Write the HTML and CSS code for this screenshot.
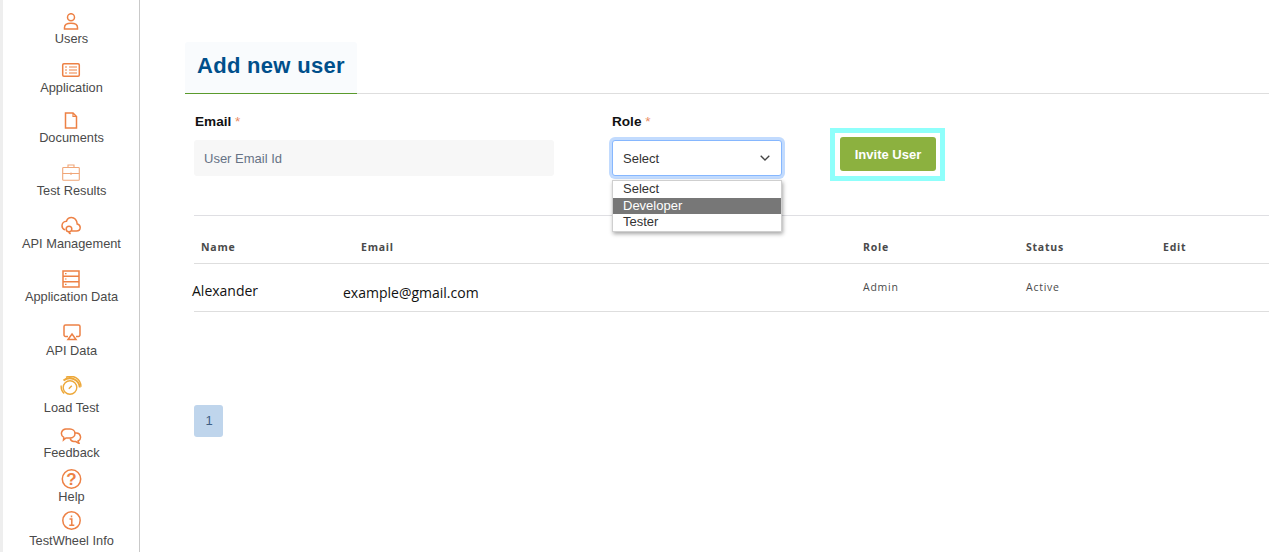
FILE: index.html
```html
<!DOCTYPE html>
<html lang="en">
<head>
<meta charset="utf-8">
<title>Add new user</title>
<link rel="stylesheet" href="styles.css">
</head>
<body>
<div class="app">
  <nav class="sidebar">
    <a class="nav-item users">
      <svg class="icon" width="24" height="17" viewBox="0 0 24 17"><circle cx="12" cy="4.200" r="3.500"/><path d="M5.500 16v-1.500c0-2.600 2.400-4.200 6.500-4.200s6.500 1.600 6.500 4.200V16z"/></svg>
      <span>Users</span>
    </a>
    <a class="nav-item application">
      <svg class="icon" width="20" height="16" viewBox="0 0 20 16"><rect x="1.700" y="1.700" width="16.600" height="12.600" rx="1.200"/><path class="thin" d="M4 5h2M4 8h2M4 11h2M8 5h8M8 8h8M8 11h8"/></svg>
      <span>Application</span>
    </a>
    <a class="nav-item documents">
      <svg class="icon" width="14" height="17" viewBox="0 0 14 17"><path d="M1.500 1h7.500l3.500 3.500v11.500h-11z"/><path class="thin" d="M9 1v3.500h3.500"/></svg>
      <span>Documents</span>
    </a>
    <a class="nav-item results">
      <svg class="icon light" width="18" height="17" viewBox="0 0 18 17"><rect x=".7" y="3.500" width="16.600" height="12.800" rx=".8"/><path d="M6 3.500V1h6v2.500M.7 9.500h16.600M9 8.500v2.500"/></svg>
      <span>Test Results</span>
    </a>
    <a class="nav-item api">
      <svg class="icon" width="20" height="19" viewBox="0 0 20 19"><path d="M11 15h4.500c2.200 0 3.700-1.600 3.700-3.500 0-1.800-1.300-3.200-3-3.500C16 4.200 13.500 1.500 10.500 1.500 8 1.500 6.200 3 5.500 5.200 3 5.200 1 7.200 1 9.800c0 2 1.400 3.600 3.200 4.100"/><circle cx="8" cy="13" r="2.800"/><path d="M8 15.800c0 1 .6 1.800 1.800 1.800"/></svg>
      <span>API Management</span>
    </a>
    <a class="nav-item appdata">
      <svg class="icon" width="18" height="18" viewBox="0 0 18 18"><rect x="1" y="1" width="16" height="16"/><path d="M1 6.300h16M1 11.700h16"/><path class="thin" d="M3 3.700h1.500M3 9h1.500M3 14.300h1.500"/></svg>
      <span>Application Data</span>
    </a>
    <a class="nav-item apidata">
      <svg class="icon" width="18" height="17" viewBox="0 0 18 17"><path d="M5 12.500H2.500a1.500 1.500 0 0 1-1.500-1.500V2.500A1.500 1.500 0 0 1 2.500 1h13A1.500 1.500 0 0 1 17 2.500V11a1.500 1.500 0 0 1-1.500 1.500H13"/><path d="M9 10l4 5.500H5z"/></svg>
      <span>API Data</span>
    </a>
    <a class="nav-item load">
      <svg class="icon gold" width="22" height="21" viewBox="0 0 22 21"><circle cx="10" cy="11.500" r="6.800"/><path class="arc" d="M3.500 4.500A10 10 0 0 1 19.800 11.500"/><path d="M1.200 9.500a9.500 9.500 0 0 0 3 8M6 1.300a10.500 10.500 0 0 1 15 9.500"/><path d="M8.800 12.700l3-3"/></svg>
      <span>Load Test</span>
    </a>
    <a class="nav-item feedback">
      <svg class="icon" width="22" height="16" viewBox="0 0 22 16"><path d="M6.500 1h3.500a5 4.500 0 0 1 0 9H6l-2.500 2 .3-2.600A4.500 4.500 0 0 1 6.500 1z"/><path d="M14.500 5h2a4.200 4.200 0 0 1 1.600 8l1 2.500-3.400-2h-2a4 4 0 0 1-3.500-3"/></svg>
      <span>Feedback</span>
    </a>
    <a class="nav-item help">
      <svg class="icon" width="21" height="20" viewBox="0 0 21 20"><circle cx="10.500" cy="10" r="9.200"/><text x="10.500" y="16" text-anchor="middle">?</text></svg>
      <span>Help</span>
    </a>
    <a class="nav-item info">
      <svg class="icon" width="19" height="19" viewBox="0 0 19 19"><circle cx="9.500" cy="9.500" r="8.700"/><path d="M7.500 8h2.300v6M7.300 14.300h5"/><path class="dot" d="M9.500 4.500v1.800"/></svg>
      <span>TestWheel Info</span>
    </a>
  </nav>

  <main class="content">
    <div class="tab-bar">
      <h1 class="tab">Add new user</h1>
    </div>

    <form class="form">
      <div class="field email-field">
        <label class="label" for="email">Email <em>*</em></label>
        <input class="input" id="email" type="text" placeholder="User Email Id">
      </div>
      <div class="field role-field">
        <div class="label">Role <em>*</em></div>
        <div class="select">
          <span>Select</span>
          <svg width="10" height="6" viewBox="0 0 10 6"><path d="M.7.7 5 5l4.300-4.300"/></svg>
        </div>
        <ul class="options">
          <li>Select</li>
          <li class="active">Developer</li>
          <li>Tester</li>
        </ul>
      </div>
      <div class="invite-ring">
        <button class="invite" type="button">Invite User</button>
      </div>
    </form>

    <section class="users-table">
      <div class="table-row table-head">
        <div class="name-head">Name</div>
        <div class="email-head">Email</div>
        <div>Role</div>
        <div>Status</div>
        <div>Edit</div>
      </div>
      <div class="table-row table-body">
        <div class="name-cell">Alexander</div>
        <div class="email-cell">example@gmail.com</div>
        <div class="small-cell">Admin</div>
        <div class="small-cell">Active</div>
        <div></div>
      </div>
    </section>

    <div class="pagination"><span class="page">1</span></div>
  </main>
</div>
</body>
</html>
```
FILE: styles.css
```css
* { box-sizing: border-box; }
html, body { margin: 0; height: 100%; overflow: hidden; background: #fff; }
body { font-family: "Liberation Sans", Arial, sans-serif; }

.app { display: flex; height: 552px; }

.sidebar {
  width: 140px;
  flex: none;
  height: 552px;
  overflow: hidden;
  border-left: 3px solid #eeeeee;
  border-right: 1px solid #c9c9c9;
  padding: 13px 0 0 1px;
  display: flex;
  flex-direction: column;
  align-items: center;
}
.nav-item {
  display: flex;
  flex-direction: column;
  align-items: center;
  color: #4a4a4a;
  font-size: 12.800px;
  line-height: 15px;
  flex: none;
}
.nav-item span { display: block; white-space: nowrap; }
.icon { display: block; fill: none; stroke: #ed8145; stroke-width: 1.500; }
.icon .thin { stroke-width: 1.200; }
.icon.light { stroke: #f0a678; stroke-width: 1.100; }
.icon.gold { stroke: #eda83a; stroke-width: 1.400; }
.icon .arc { stroke-width: 2; }
.icon text { font: bold 17px "Liberation Sans", Arial, sans-serif; fill: #ed8145; stroke: none; }

.users span { margin-top: 1px; }
.application { margin-top: 16px; }
.application span { margin-top: 2px; }
.documents { margin-top: 17px; }
.documents span { margin-top: 1px; }
.results { margin-top: 19px; }
.results span { margin-top: 2px; }
.api { margin-top: 18px; }
.api span { margin-top: 1px; }
.appdata { margin-top: 19px; }
.appdata span { margin-top: 1px; }
.apidata { margin-top: 20px; }
.apidata span { margin-top: 2px; }
.load { margin-top: 18px; }
.load span { margin-top: 3px; }
.feedback { margin-top: 13px; }
.feedback span { margin-top: 1px; }
.help { margin-top: 9px; }
.help span { margin-top: 0; }
.info { margin-top: 7px; }
.info span { margin-top: 3px; }

.content { flex: 1; min-width: 0; padding: 42px 0 0 45px; }

.tab-bar { border-bottom: 1px solid #dedede; height: 52px; }
.tab {
  width: 172px;
  height: 52px;
  margin: 0;
  padding: 10px 0 0 12px;
  background: #f9fbfd;
  border-bottom: 1px solid #5a9a2c;
  border-radius: 3px 3px 0 0;
  color: #004f8b;
  font-size: 22px;
  line-height: 28px;
  letter-spacing: .3px;
  font-weight: bold;
}

.form { display: flex; height: 122px; margin-left: 9px; border-bottom: 1px solid #dfdfe3; }
.field { flex: none; position: relative; }
.email-field { width: 360px; margin-right: 58px; }
.role-field { width: 170px; margin-right: 48px; }
.label {
  display: block;
  height: 46px;
  padding: 20px 0 0 1px;
  font-size: 13.600px;
  line-height: 16px;
  font-weight: bold;
  color: #111;
}
.role-field .label { padding-left: 0; }
.label em { font-style: normal; font-weight: normal; color: #e98a63; }
.input {
  display: block;
  width: 360px;
  height: 36px;
  padding: 0 10px;
  border: 0;
  border-radius: 3px;
  background: #f7f7f7;
  font: 13px "Liberation Sans", Arial, sans-serif;
}
.input::placeholder { color: #667285; opacity: 1; }
.select {
  display: flex;
  align-items: center;
  justify-content: space-between;
  width: 170px;
  height: 36px;
  padding: 0 11px 0 10px;
  background: #fff;
  border: 1px solid #86b7fe;
  border-radius: 3px;
  box-shadow: 0 0 0 3px #c2dbfe;
  font-size: 13px;
  color: #333;
}
.select svg { fill: none; stroke: #444; stroke-width: 1.300; }
.options {
  position: absolute;
  left: 0;
  top: 86px;
  width: 170px;
  margin: 0;
  padding: 0;
  list-style: none;
  background: #fff;
  border: 1px solid #cfcfcf;
  box-shadow: 1px 2px 4px rgba(0, 0, 0, .35);
  font-size: 13px;
  line-height: 16.500px;
  color: #333;
}
.options li { padding-left: 10px; }
.options .active { background: #777; color: #fff; }
.invite-ring {
  flex: none;
  align-self: flex-start;
  margin-top: 34px;
  width: 115px;
  height: 53px;
  padding: 4px 0 0 5px;
  border: 5px solid #8ffffb;
}
.invite {
  display: block;
  width: 96px;
  height: 34px;
  margin: 0;
  padding: 1px 0 0;
  border: 0;
  border-radius: 3px;
  background: #8cb13f;
  color: #fff;
  font: bold 13px "Liberation Sans", Arial, sans-serif;
}

.users-table { margin-left: 9px; }
.table-row {
  display: grid;
  grid-template-columns: 149px 520px 163px 137px 1fr;
  border-bottom: 1px solid #dedede;
  color: #4a4a4a;
}
.table-head {
  height: 48px;
  padding-top: 24px;
  font-family: "Open Sans", sans-serif;
  font-size: 10.500px;
  line-height: 14px;
  font-weight: 700;
  letter-spacing: .75px;
}
.name-head { padding-left: 7px; }
.email-head { padding-left: 18px; }
.table-body { height: 48px; }
.name-cell {
  margin-left: -2px;
  padding-top: 18px;
  font-family: "Open Sans", sans-serif;
  font-size: 14px;
  line-height: 18px;
  color: #111;
}
.email-cell {
  padding-top: 20px;
  font-family: "Open Sans", sans-serif;
  font-size: 14px;
  line-height: 18px;
  color: #111;
}
.small-cell {
  padding-top: 16px;
  font-family: "Open Sans", sans-serif;
  font-size: 10.500px;
  line-height: 14px;
  letter-spacing: .75px;
}

.pagination { margin: 93px 0 0 9px; }
.page {
  display: flex;
  align-items: center;
  justify-content: center;
  width: 29px;
  height: 32px;
  padding: 0 0 1px 1px;
  border-radius: 3px;
  background: #bfd5ec;
  color: #3d5f85;
  font-size: 13px;
}
```
